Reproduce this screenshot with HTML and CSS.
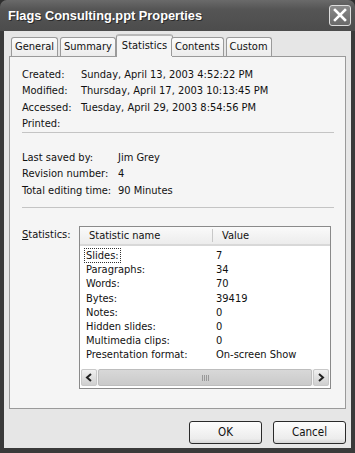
FILE: index.html
```html
<!doctype html>
<html>
<head>
    <meta charset="utf-8" />
    <title>Flags Consulting.ppt Properties</title>
    <link rel="stylesheet" href="styles.css">
</head>
<body>
    <div class="window">
        <div class="titlebar">
            <span class="title">Flags Consulting.ppt Properties</span>
            <span class="close">
                <svg width="14" height="14" viewBox="0 0 14 14"><path d="M2 2 L12 12 M12 2 L2 12" stroke="#fff" stroke-width="2.6" stroke-linecap="square"/></svg>
            </span>
        </div>
        <div class="body">
            <div class="tabs">
                <span class="tab">General</span>
                <span class="tab">Summary</span>
                <span class="tab active">Statistics</span>
                <span class="tab">Contents</span>
                <span class="tab">Custom</span>
            </div>
            <div class="panel">
                <div class="group dates">
                    <span>Created:</span><span>Sunday, April 13, 2003 4:52:22 PM</span>
                    <span>Modified:</span><span>Thursday, April 17, 2003 10:13:45 PM</span>
                    <span>Accessed:</span><span>Tuesday, April 29, 2003 8:54:56 PM</span>
                    <span>Printed:</span><span></span>
                </div>
                <div class="sep"></div>
                <div class="group saved">
                    <span>Last saved by:</span><span>Jim Grey</span>
                    <span>Revision number:</span><span>4</span>
                    <span>Total editing time:</span><span>90 Minutes</span>
                </div>
                <div class="sep"></div>
                <div class="stats">
                    <span class="label"><u>S</u>tatistics:</span>
                    <div class="listbox">
                        <div class="head">
                            <span class="col1">Statistic name</span>
                            <span class="col2">Value</span>
                        </div>
                        <div class="rows">
                            <div class="row"><span class="col1"><span class="focus">Slides:</span></span><span class="col2">7</span></div>
                            <div class="row"><span class="col1">Paragraphs:</span><span class="col2">34</span></div>
                            <div class="row"><span class="col1">Words:</span><span class="col2">70</span></div>
                            <div class="row"><span class="col1">Bytes:</span><span class="col2">39419</span></div>
                            <div class="row"><span class="col1">Notes:</span><span class="col2">0</span></div>
                            <div class="row"><span class="col1">Hidden slides:</span><span class="col2">0</span></div>
                            <div class="row"><span class="col1">Multimedia clips:</span><span class="col2">0</span></div>
                            <div class="row"><span class="col1">Presentation format:</span><span class="col2">On-screen Show</span></div>
                        </div>
                        <div class="scrollbar">
                            <span class="arrow">
                                <svg width="8" height="9" viewBox="0 0 8 9"><path d="M6 1 L2 4.5 L6 8" fill="none" stroke="#222" stroke-width="2"/></svg>
                            </span>
                            <span class="thumb"><span class="grip"></span></span>
                            <span class="arrow">
                                <svg width="8" height="9" viewBox="0 0 8 9"><path d="M2 1 L6 4.5 L2 8" fill="none" stroke="#222" stroke-width="2"/></svg>
                            </span>
                        </div>
                    </div>
                </div>
            </div>
            <div class="buttons">
                <span class="btn">OK</span>
                <span class="btn">Cancel</span>
            </div>
        </div>
    </div>
</body>
</html>
```

FILE: styles.css
```css
*{
    box-sizing:border-box;
}
html,body{
    margin:0;
    padding:0;
    background:#2e2e2e;
}
.window{
    width:355px;
    height:453px;
    background:#3a3a3a;
    border-radius:7px 7px 0 0;
    font-family:"DejaVu Sans Condensed","DejaVu Sans",sans-serif;
    font-size:11px;
    color:#111;
    overflow:hidden;
}
.titlebar{
    height:31px;
    display:flex;
    align-items:center;
    justify-content:space-between;
    padding:0 4px 1px 8px;
    background:linear-gradient(#6a6a6a,#555 30%,#4c4c4c);
}
.title{
    color:#fff;
    font-family:"Liberation Sans",Arial,sans-serif;
    font-weight:bold;
    font-size:12.8px;
    text-shadow:1px 1px 0 #2a2a2a;
}
.close{
    width:22px;
    height:21px;
    border:1px solid #ddd;
    border-radius:3px;
    background:linear-gradient(#8a8a8a,#6a6a6a);
    display:flex;
    align-items:center;
    justify-content:center;
}
.body{
    height:417px;
    margin:0 4px;
    background:#e6e6e6;
    padding:3px 5px 0 5px;
}
.tabs{
    display:flex;
    align-items:flex-end;
    height:22px;
    padding-left:2px;
    position:relative;
    z-index:1;
}
.tab{
    height:19px;
    line-height:18px;
    padding:0 3px;
    margin-right:2px;
    border:1px solid #9a9a9a;
    border-bottom:none;
    border-radius:3px 3px 0 0;
    background:linear-gradient(#fbfbfb,#ececec);
}
.tab.active{
    height:23px;
    line-height:19px;
    margin:0 0 -1px -2px;
    padding:0 5px;
    background:#f5f5f5;
    border-top:2px solid #b8b8b8;
}
.tab.active + .tab{
    margin-left:-2px;
}
.panel{
    height:353px;
    border:1px solid #9a9a9a;
    background:#f5f5f5;
    padding:10px 11px 0 12px;
}
.group{
    display:grid;
    line-height:16px;
}
.dates{
    grid-template-columns:59px 1fr;
    height:65px;
}
.saved{
    grid-template-columns:96px 1fr;
    padding-top:17px;
    height:66px;
}
.sep{
    height:0;
    border-top:1px solid #c4c4c4;
}
.saved + .sep{
    margin-top:8px;
}
.stats{
    display:flex;
    padding-top:18px;
}
.label{
    width:57px;
    padding-top:2px;
}
.listbox{
    width:252px;
    height:163px;
    border:1px solid #8a8a8a;
    background:#fff;
    display:flex;
    flex-direction:column;
}
.head{
    height:19px;
    line-height:17px;
    display:flex;
    background:linear-gradient(#fafafa,#ececec);
    border-bottom:2px solid #d8d8d8;
}
.head .col1{
    width:133px;
    padding-left:9px;
    border-right:1px solid #c8c8c8;
    margin:2px 0;
    line-height:13px;
}
.head .col2{
    padding-left:9px;
}
.rows{
    flex:1;
    padding-top:3px;
}
.row{
    display:flex;
    height:14.2px;
    line-height:14px;
}
.row .col1{
    width:136px;
    padding-left:6px;
}
.focus{
    outline:1px dotted #333;
    margin-left:-1px;
    padding:0 1px;
}
.scrollbar{
    height:17px;
    display:flex;
    background:#f4f4f4;
    margin:0 1px 2px 1px;
}
.arrow{
    width:16px;
    height:17px;
    border:1px solid #c8c8c8;
    border-radius:2px;
    background:linear-gradient(#f0f0f0,#cfcfcf);
    display:flex;
    align-items:center;
    justify-content:center;
}
.thumb{
    flex:1;
    margin:0 1px;
    border:1px solid #bdbdbd;
    border-radius:2px;
    background:linear-gradient(#d8d8d8,#cacaca);
    display:flex;
    align-items:center;
    justify-content:center;
}
.grip{
    width:7px;
    height:6px;
    background:repeating-linear-gradient(90deg,#999 0 1px,transparent 1px 2px);
}
.buttons{
    display:flex;
    justify-content:flex-end;
    gap:11px;
    padding-top:12px;
}
.btn{
    width:73px;
    height:23px;
    line-height:21px;
    text-align:center;
    border:1px solid #2a2a2a;
    border-radius:3px;
    background:linear-gradient(#fdfdfd,#ececec 80%,#d6d6d6);
    font-size:11.5px;
}
```
